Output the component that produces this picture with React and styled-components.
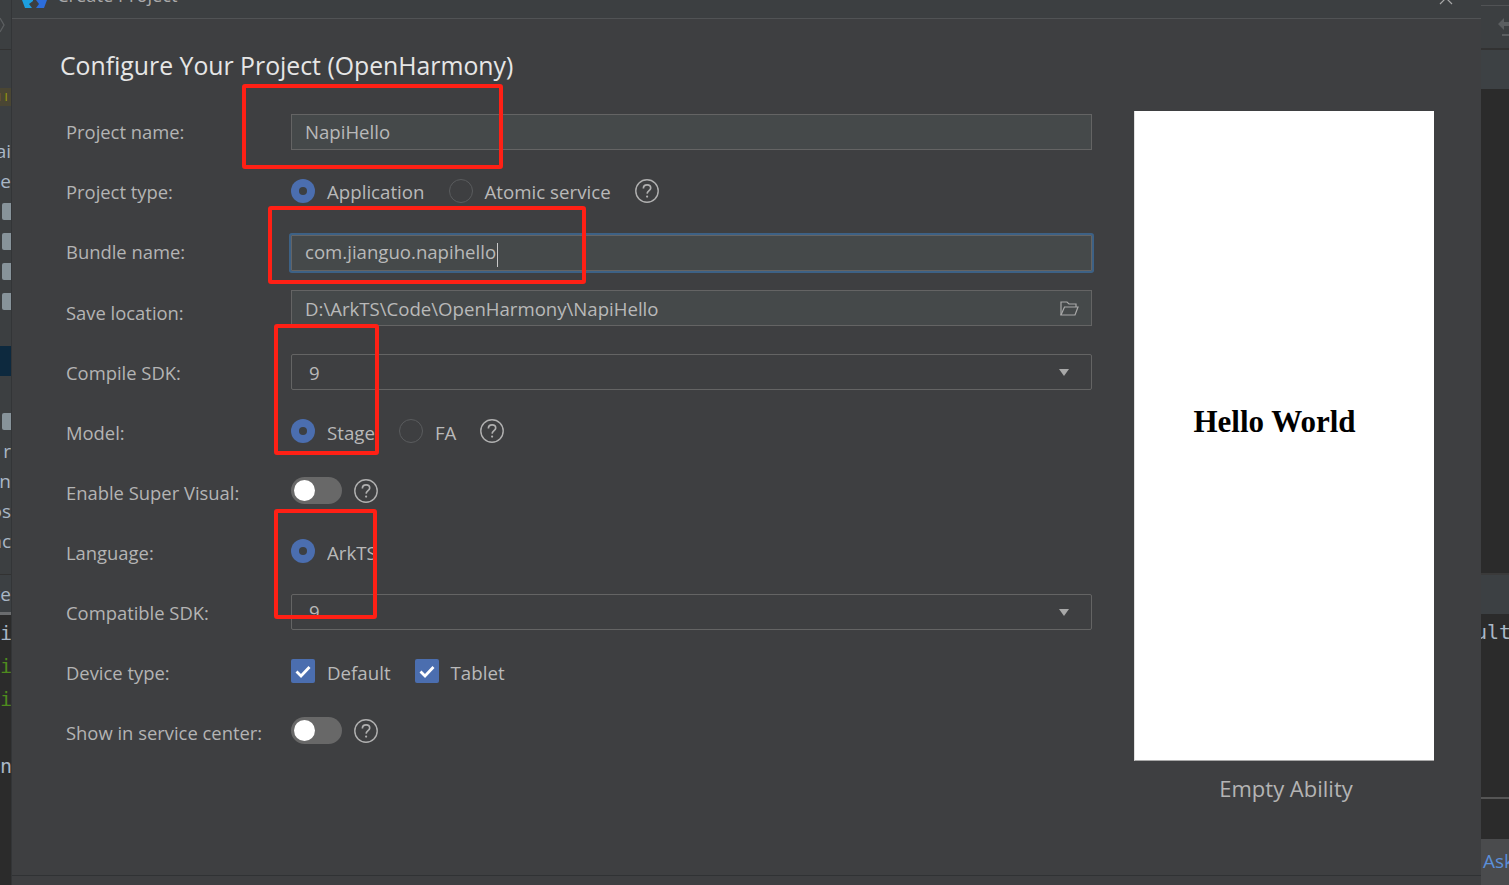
import React from "react";
import styled, { createGlobalStyle } from "styled-components";

const Global = createGlobalStyle`
  html, body { margin: 0; padding: 0; background: #2b2b2b; }
  body { font-family: "Open Sans", "Liberation Sans", sans-serif; }
`;

const Page = styled.div`
  position: relative;
  display: flex;
  width: 1509px;
  height: 885px;
  overflow: hidden;
`;

/* the IDE that peeks out left and right of the dialog */
const LeftStrip = styled.div`
  width: 11px;
  flex-shrink: 0;
  display: flex;
  flex-direction: column;
  overflow: hidden;
  background: #3c3f41;
  color: #a9b7c6;
`;

const RightStrip = styled(LeftStrip)`
  width: 28px;
  background: #2b2b2b;
`;

const StripRow = styled.div`
  height: ${(p) => p.$h || 30}px;
  flex-shrink: 0;
  display: flex;
  align-items: ${(p) => (p.$cut ? "flex-start" : "center")};
  justify-content: ${(p) => (p.$left ? "flex-start" : "flex-end")};
  overflow: hidden;
  white-space: nowrap;
  background: ${(p) => p.$bg || "transparent"};
  color: ${(p) => p.$color || "inherit"};
  font-size: 19px;
  line-height: ${(p) => (p.$cut ? p.$h : 30)}px;
`;

const CodeRow = styled(StripRow)`
  font-family: "DejaVu Sans Mono", "Liberation Mono", monospace;
  font-size: 20px;
`;

const MarkerTicks = styled.span`
  font-size: 15px;
  letter-spacing: 3px;
  margin-bottom: 5px;
`;

const PeekCode = styled.span`
  margin-left: -6px;
`;

const AskLink = styled.span`
  margin: 0 0 2px 2px;
`;

const FileIcon = styled.div`
  width: 9px;
  height: 17px;
  background: #87939a;
  border-radius: 2px 0 0 2px;
  flex-shrink: 0;
`;

const Dialog = styled.div`
  flex: 1;
  display: flex;
  flex-direction: column;
  background: #3e3f41;
  border-left: 1px solid #333537;
  min-width: 0;
`;

const TitleBar = styled.div`
  height: 18px;
  flex-shrink: 0;
  display: flex;
  justify-content: space-between;
  align-items: flex-end;
  padding: 0 28px 0 10px;
  overflow: hidden;
  background: #3c3f41;
  border-bottom: 1px solid #515355;
`;

const TitleGroup = styled.div`
  display: flex;
  align-items: flex-end;
  gap: 10px;
  height: 18px;
  margin-bottom: 10px;
`;

const WindowTitle = styled.span`
  color: #a9a9a9;
  font-size: 18.3px;
  line-height: 26px;
  white-space: nowrap;
`;

const CloseIcon = styled.svg`
  align-self: flex-start;
  margin-top: -9px;
`;

const Heading = styled.h1`
  margin: 0;
  height: 83px;
  box-sizing: border-box;
  padding: 8px 0 0 48px;
  display: flex;
  align-items: center;
  color: #e6e6e6;
  font-size: 24.8px;
  font-weight: 400;
`;

const Content = styled.div`
  flex: 1;
  display: flex;
  gap: 42px;
  padding-left: 54px;
`;

const Form = styled.div`
  width: 1026px;
  flex-shrink: 0;
`;

const Label = styled.span`
  width: 225px;
  flex-shrink: 0;
  color: #b4b4b4;
  font-size: 18.4px;
  white-space: nowrap;
`;

const OptionText = styled.span`
  margin: 0 24px 0 12px;
  color: #b9b9b9;
  font-size: 18.7px;
  white-space: nowrap;
  max-width: ${(p) => (p.$clip ? `${p.$clip}px` : "none")};
  overflow: ${(p) => (p.$clip ? "hidden" : "visible")};
`;

const Row = styled.div`
  height: 60px;
  display: flex;
  align-items: center;
  ${Label} {
    padding-bottom: ${(p) => (p.$low ? 0 : 2)}px;
  }
  ${OptionText} {
    margin-top: ${(p) => (p.$low ? 2 : 0)}px;
  }
`;

const Field = styled.div`
  flex: 1;
  height: 36px;
  box-sizing: border-box;
  display: flex;
  align-items: center;
  justify-content: space-between;
  padding: 0 12px ${(p) => (p.$lift ? 2 : 0)}px 13px;
  margin-top: ${(p) => p.$top || 0}px;
  margin-bottom: ${(p) => p.$bottom || 0}px;
  background: #45494a;
  border: 1px solid #646464;
  box-shadow: ${(p) => (p.$focus ? "0 0 0 2px #3d6185" : "none")};
  border-radius: ${(p) => (p.$focus ? "1px" : "0")};
  color: #b9b9b9;
  font-size: 18.6px;
`;

const Select = styled(Field)`
  background: transparent;
  border-radius: 2px;
  padding: 0 22px 0 17px;
`;

const ClippedValue = styled.span`
  align-self: flex-start;
  height: ${(p) => p.$h}px;
  overflow: hidden;
  line-height: 34px;
`;

const Caret = styled.span`
  display: inline-block;
  width: 1px;
  height: 24px;
  margin-left: 1px;
  background: #c8c8c8;
  vertical-align: middle;
`;

const Arrow = styled.span`
  width: 0;
  height: 0;
  border-left: 5.5px solid transparent;
  border-right: 5.5px solid transparent;
  border-top: 7px solid #a8a8a8;
`;

const Options = styled.div`
  display: flex;
  align-items: center;
  margin-top: -2px;
`;

const Radio = styled.span`
  width: 24px;
  height: 24px;
  box-sizing: border-box;
  flex-shrink: 0;
  border-radius: 50%;
  display: flex;
  align-items: center;
  justify-content: center;
  background: ${(p) => (p.$on ? "#4b6eaf" : "transparent")};
  border: ${(p) => (p.$on ? "none" : "1px solid #5a5c5e")};
  &::after {
    content: "";
    display: ${(p) => (p.$on ? "block" : "none")};
    width: 8px;
    height: 8px;
    border-radius: 50%;
    background: #3c3f41;
  }
`;

const Check = styled.span`
  width: 24px;
  height: 24px;
  flex-shrink: 0;
  border-radius: 2px;
  display: flex;
  align-items: center;
  justify-content: center;
  background: #4b6eaf;
`;

const Switch = styled.span`
  width: 51px;
  height: 27px;
  box-sizing: border-box;
  padding-left: 3px;
  border-radius: 14px;
  display: flex;
  align-items: center;
  background: #686868;
  margin: -1px 12px 0 0;
  &::before {
    content: "";
    width: 21px;
    height: 21px;
    border-radius: 50%;
    background: #fff;
  }
`;

const Preview = styled.div`
  padding-top: 9px;
  width: 300px;
  flex-shrink: 0;
`;

const Screen = styled.div`
  height: 650px;
  box-sizing: border-box;
  display: flex;
  align-items: center;
  justify-content: center;
  padding: 0 20px 28px 0;
  background: #fff;
  border-left: 1px solid #e0e0e0;
  border-bottom: 1px solid #a8a8a8;
  color: #000;
  font-family: "Liberation Serif", serif;
  font-size: 31px;
  font-weight: 700;
`;

const Caption = styled.div`
  margin: 12px 0 0 4px;
  text-align: center;
  color: #b4b4b4;
  font-size: 22px;
`;

const Footer = styled.div`
  height: 9px;
  flex-shrink: 0;
  border-top: 1px solid #303234;
`;

const Annotation = styled.div`
  position: absolute;
  left: ${(p) => p.$x}px;
  top: ${(p) => p.$y}px;
  width: ${(p) => p.$w}px;
  height: ${(p) => p.$h}px;
  box-sizing: border-box;
  border: 4px solid #ff2015;
  border-radius: 3px;
`;

const Help = () => (
  <svg width="24" height="24" viewBox="0 0 24 24" fill="none" stroke="#b0b0b0" strokeWidth="1.4">
    <circle cx="12" cy="12" r="11.2" />
    <path d="M8.4 9.4c0-2.2 1.6-3.5 3.7-3.5 2.1 0 3.6 1.2 3.6 3.1 0 2.6-3.4 2.7-3.6 5.6" strokeWidth="1.7" />
    <circle cx="12.1" cy="17.6" r="1.1" fill="#b0b0b0" stroke="none" />
  </svg>
);

const Tick = () => (
  <svg width="16" height="13" viewBox="0 0 16 13" fill="none" stroke="#fff" strokeWidth="2.8">
    <path d="M1.5 6.5 6 11 14.5 2" />
  </svg>
);

const FolderOpen = () => (
  <svg width="19" height="15" viewBox="0 0 19 15" fill="none" stroke="#a8a8a8" strokeWidth="1.2">
    <path d="M1 14V1h6l2 2h7v3" />
    <path d="M1 14h14l3-8H4.5z" />
  </svg>
);

const Logo = () => (
  <svg width="25" height="8" viewBox="0 0 25 8">
    <path d="M0 0h11v1L7 4l3 4H3z" fill="#1c9fe0" />
    <path d="M14 0h11l-3 8H14l3-4z" fill="#2c6ddb" />
  </svg>
);

const treeRows = [
  { text: "ai" }, { text: "e" }, { file: true }, { file: true }, { file: true }, { file: true },
  {}, { selected: true }, {}, { file: true }, { text: "r" }, { text: "n" }, { text: "os" }, { text: "nc" },
];

export default function App() {
  return (
    <Page>
      <Global />
      <LeftStrip>
        <StripRow $h={49} $left>
          <svg width="8" height="16" viewBox="0 0 8 16" fill="none" stroke="#5c5f61" strokeWidth="1.3">
            <path d="M0 1l4 7-4 7" />
          </svg>
        </StripRow>
        <StripRow $h={1} $bg="#323232" />
        <StripRow $h={38} />
        <StripRow $h={18} $bg="#4a4633" $color="#8f8f10">
          <MarkerTicks>ıı</MarkerTicks>
        </StripRow>
        <StripRow $h={30} />
        {treeRows.map((r, i) => (
          <StripRow key={i} $bg={r.selected ? "#0d293e" : undefined}>
            {r.file ? <FileIcon /> : r.text}
          </StripRow>
        ))}
        <StripRow $h={18} $cut />
        <StripRow $h={1} $bg="#323232" />
        <StripRow $h={37} $bg="#3c4043">
          te
        </StripRow>
        <StripRow $h={3} $bg="#6a6c6e" />
        <StripRow $h={1} $bg="#2b2b2b" />
        <CodeRow $h={33} $bg="#2b2b2b" $left $color="#a9b7c6">i</CodeRow>
        <CodeRow $h={33} $bg="#2b2b2b" $left $color="#4e8a1e">i</CodeRow>
        <CodeRow $h={33} $bg="#2b2b2b" $left $color="#4e8a1e">i</CodeRow>
        <CodeRow $h={34} $bg="#2b2b2b" />
        <CodeRow $h={33} $bg="#2b2b2b" $left $color="#a9b7c6">n</CodeRow>
        <CodeRow $h={120} $bg="#2b2b2b" />
      </LeftStrip>

      <Dialog>
        <TitleBar>
          <TitleGroup>
            <Logo />
            <WindowTitle>Create Project</WindowTitle>
          </TitleGroup>
          <CloseIcon width="14" height="14" viewBox="0 0 14 14" fill="none" stroke="#a8a8a8" strokeWidth="1.2">
            <path d="M1 1l12 12M13 1 1 13" />
          </CloseIcon>
        </TitleBar>
        <Heading>Configure Your Project (OpenHarmony)</Heading>
        <Content>
          <Form>
            <Row>
              <Label>Project name:</Label>
              <Field $lift>NapiHello</Field>
            </Row>
            <Row>
              <Label>Project type:</Label>
              <Options>
                <Radio $on />
                <OptionText>Application</OptionText>
                <Radio />
                <OptionText>Atomic service</OptionText>
                <Help />
              </Options>
            </Row>
            <Row>
              <Label>Bundle name:</Label>
              <Field $focus $top={2}>
                <span>
                  com.jianguo.napihello
                  <Caret />
                </span>
              </Field>
            </Row>
            <Row $low>
              <Label>Save location:</Label>
              <Field $bottom={8}>
                D:\ArkTS\Code\OpenHarmony\NapiHello
                <FolderOpen />
              </Field>
            </Row>
            <Row $low>
              <Label>Compile SDK:</Label>
              <Select>
                9
                <Arrow />
              </Select>
            </Row>
            <Row $low>
              <Label>Model:</Label>
              <Options>
                <Radio $on />
                <OptionText $clip={50}>Stage</OptionText>
                <Radio />
                <OptionText>FA</OptionText>
                <Help />
              </Options>
            </Row>
            <Row $low>
              <Label>Enable Super Visual:</Label>
              <Options>
                <Switch />
                <Help />
              </Options>
            </Row>
            <Row $low>
              <Label>Language:</Label>
              <Options>
                <Radio $on />
                <OptionText $clip={47}>ArkTS</OptionText>
              </Options>
            </Row>
            <Row $low>
              <Label>Compatible SDK:</Label>
              <Select>
                <ClippedValue $h={22}>9</ClippedValue>
                <Arrow />
              </Select>
            </Row>
            <Row $low>
              <Label>Device type:</Label>
              <Options>
                <Check>
                  <Tick />
                </Check>
                <OptionText>Default</OptionText>
                <Check>
                  <Tick />
                </Check>
                <OptionText>Tablet</OptionText>
              </Options>
            </Row>
            <Row $low>
              <Label>Show in service center:</Label>
              <Options>
                <Switch />
                <Help />
              </Options>
            </Row>
          </Form>
          <Preview>
            <Screen>Hello World</Screen>
            <Caption>Empty Ability</Caption>
          </Preview>
        </Content>
        <Footer />
      </Dialog>

      <RightStrip>
        <StripRow $h={5} $bg="#3c3f41" />
        <StripRow $h={1} $bg="#515355" />
        <StripRow $h={42} $bg="#3c3f41" $left>
          <svg width="28" height="32" viewBox="0 0 28 32" fill="#5b5e60">
            <path d="M23 7 17 13l6 6v-4h5v-4h-5z" />
            <path d="M21 23h7v2h-7z" />
          </svg>
        </StripRow>
        <StripRow $h={2} $bg="#323232" />
        <StripRow $h={39} $bg="#3d4144" />
        <StripRow $h={484} />
        <StripRow $h={2} $bg="#3a3a3a" />
        <StripRow $h={39} $bg="#3c4043" />
        <CodeRow $h={36} $left $color="#a9b7c6">
          <PeekCode>ult</PeekCode>
        </CodeRow>
        <StripRow $h={147} />
        <StripRow $h={2} $bg="#555" />
        <StripRow $h={40} />
        <StripRow $h={46} $bg="#4a4b4d" $left $color="#5b8fd9">
          <AskLink>Ask</AskLink>
        </StripRow>
      </RightStrip>

      <Annotation $x={242} $y={84} $w={261} $h={85} />
      <Annotation $x={268} $y={206} $w={318} $h={78} />
      <Annotation $x={274} $y={324} $w={105} $h={131} />
      <Annotation $x={274} $y={509} $w={103} $h={110} />
    </Page>
  );
}
